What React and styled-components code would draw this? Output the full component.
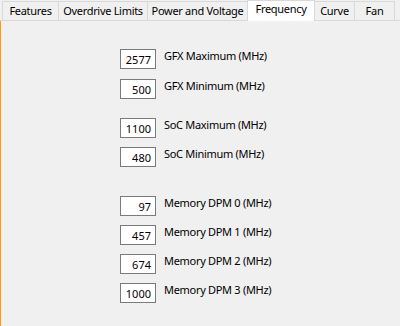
import styled, { createGlobalStyle } from "styled-components";

const GlobalStyle = createGlobalStyle`
  html, body {
    margin: 0;
    padding: 0;
    background: #f0f0f0;
  }
  body {
    font-family: "Noto Sans", "Open Sans", sans-serif;
    font-size: 11px;
    letter-spacing: -0.3px;
    color: #000;
  }
`;

const Window = styled.div`
  width: 400px;
  height: 326px;
  display: flex;
  flex-direction: column;
  overflow: hidden;
  background: #f0f0f0;
`;

const TabBar = styled.div`
  height: 21px;
  display: flex;
  align-items: flex-end;
  padding-left: 2px;
  box-sizing: border-box;
  border-bottom: 1px solid #d9d9d9;
`;

const Tab = styled.div`
  position: relative;
  box-sizing: border-box;
  width: ${(p) => p.$w}px;
  height: ${(p) => (p.$active ? 21 : 19)}px;
  margin-left: ${(p) => (p.$first ? 0 : -1)}px;
  margin-bottom: ${(p) => (p.$active ? -1 : 0)}px;
  padding-top: ${(p) => (p.$active ? 1 : 2)}px;
  border: 1px solid #d9d9d9;
  border-bottom: none;
  background: ${(p) => (p.$active ? "#fff" : "#f0f0f0")};
  z-index: ${(p) => (p.$active ? 1 : 0)};
  text-align: center;
  line-height: 14px;
  white-space: nowrap;
`;

const Panel = styled.div`
  flex: 1;
  border-left: 1px solid #fb9a1c;
  padding: 28px 0 0 119px;
  display: flex;
  flex-direction: column;
`;

const Group = styled.div`
  display: flex;
  flex-direction: column;
  gap: ${(p) => p.$gap}px;
  margin-bottom: ${(p) => p.$after}px;
`;

const Row = styled.div`
  display: flex;
  align-items: flex-start;
  height: 20px;
`;

const ValueBox = styled.div`
  box-sizing: border-box;
  width: 36px;
  height: 20px;
  border: 1px solid #7a7a7a;
  background: #fff;
  text-align: right;
  padding: 3px 4px 0 0;
  line-height: 14px;
  letter-spacing: 0;
`;

const Label = styled.span`
  margin-left: 8px;
  line-height: 14px;
`;

const tabs = [
  { name: "Features", w: 57 },
  { name: "Overdrive Limits", w: 90 },
  { name: "Power and Voltage", w: 101 },
  { name: "Frequency", w: 68, active: true },
  { name: "Curve", w: 41 },
  { name: "Fan", w: 41 },
];

const groups = [
  {
    gap: 10,
    after: 19,
    rows: [
      ["2577", "GFX Maximum (MHz)"],
      ["500", "GFX Minimum (MHz)"],
    ],
  },
  {
    gap: 9,
    after: 29,
    rows: [
      ["1100", "SoC Maximum (MHz)"],
      ["480", "SoC Minimum (MHz)"],
    ],
  },
  {
    gap: 9,
    after: 0,
    rows: [
      ["97", "Memory DPM 0 (MHz)"],
      ["457", "Memory DPM 1 (MHz)"],
      ["674", "Memory DPM 2 (MHz)"],
      ["1000", "Memory DPM 3 (MHz)"],
    ],
  },
];

const App = () => {
  return (
    <Window>
      <GlobalStyle />
      <TabBar>
        {tabs.map((t, i) => (
          <Tab key={t.name} $w={t.w} $active={t.active} $first={i === 0}>
            {t.name}
          </Tab>
        ))}
      </TabBar>
      <Panel>
        {groups.map((g, i) => (
          <Group key={i} $gap={g.gap} $after={g.after}>
            {g.rows.map(([val, label]) => (
              <Row key={label}>
                <ValueBox>{val}</ValueBox>
                <Label>{label}</Label>
              </Row>
            ))}
          </Group>
        ))}
      </Panel>
    </Window>
  );
};

export default App;
